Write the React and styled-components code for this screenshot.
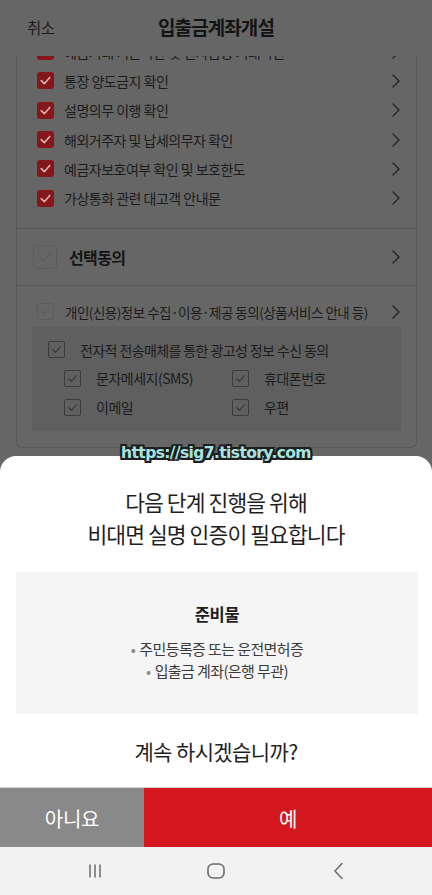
import React from 'react'
import styled, { createGlobalStyle } from 'styled-components'

const GlobalStyle = createGlobalStyle`
  html, body { margin: 0; padding: 0; }
  body {
    font-family: "Noto Sans CJK KR", "Noto Sans", sans-serif;
    background: #666666;
  }
`

const requiredItems = [
    '예금거래 기본약관 및 전자금융 거래약관',
    '통장 양도금지 확인',
    '설명의무 이행 확인',
    '해외거주자 및 납세의무자 확인',
    '예금자보호여부 확인 및 보호한도',
    '가상통화 관련 대고객 안내문',
]

const Check = ({ color = '#dcaeb0', width = 1.6 }) => (
    <svg width="100%" height="100%" viewBox="0 0 16 16">
        <path d="M4 8.2 L6.9 11 L12 5.2" fill="none" stroke={color} strokeWidth={width} strokeLinecap="round" strokeLinejoin="round" />
    </svg>
)

const Chevron = () => (
    <svg width="8" height="14" viewBox="0 0 8 14">
        <path d="M1 1 L7 7 L1 13" fill="none" stroke="#262626" strokeWidth="1.4" strokeLinecap="round" strokeLinejoin="round" />
    </svg>
)

const App = () => {
    return (<>
    <GlobalStyle />
    <Screen>
        <Header>
            <Cancel>취소</Cancel>
            <Title>입출금계좌개설</Title>
            <span />
        </Header>
        <Scroll>
            <Card>
                <Group>
                    {requiredItems.map((t) => (
                        <Row key={t}>
                            <RedBox><Check /></RedBox>
                            <RowText>{t}</RowText>
                            <Chevron />
                        </Row>
                    ))}
                </Group>
                <OptionHead>
                    <BigBox><Check color="#5f5f5f" width={1.2} /></BigBox>
                    <OptionTitle>선택동의</OptionTitle>
                    <Chevron />
                </OptionHead>
                <OptionBody>
                    <Row>
                        <FaintBox><Check color="#5d5d5d" width={1.3} /></FaintBox>
                        <SmallText>개인(신용)정보 수집·이용·제공 동의(상품서비스 안내 등)</SmallText>
                        <Chevron />
                    </Row>
                    <InnerBox>
                        <InnerRow>
                            <LineBox><Check color="#3a3a3a" width={1.3} /></LineBox>
                            <SmallText>전자적 전송매체를 통한 광고성 정보 수신 동의</SmallText>
                        </InnerRow>
                        <ChannelGrid>
                            {['문자메세지(SMS)', '휴대폰번호', '이메일', '우편'].map((c) => (
                                <Channel key={c}>
                                    <LineBox><Check color="#3a3a3a" width={1.3} /></LineBox>
                                    <SmallText>{c}</SmallText>
                                </Channel>
                            ))}
                        </ChannelGrid>
                    </InnerBox>
                </OptionBody>
            </Card>
        </Scroll>

        <Sheet>
            <Watermark>https://sig7.tistory.com</Watermark>
            <SheetTitle>다음 단계 진행을 위해<br />비대면 실명 인증이 필요합니다</SheetTitle>
            <Prepare>
                <PrepareTitle>준비물</PrepareTitle>
                <Bullet>주민등록증 또는 운전면허증</Bullet>
                <Bullet>입출금 계좌(은행 무관)</Bullet>
            </Prepare>
            <Question>계속 하시겠습니까?</Question>
            <Buttons>
                <Button $tone="no">아니요</Button>
                <Button $tone="yes">예</Button>
            </Buttons>
        </Sheet>

        <NavBar>
            <svg width="16" height="16" viewBox="0 0 16 16">
                <path d="M3 1.5 V14.5 M8 1.5 V14.5 M13 1.5 V14.5" stroke="#6c6c6c" strokeWidth="1.5" />
            </svg>
            <svg width="18" height="16" viewBox="0 0 18 16">
                <rect x="1" y="1" width="16" height="14" rx="5" fill="none" stroke="#6c6c6c" strokeWidth="1.6" />
            </svg>
            <svg width="12" height="18" viewBox="0 0 12 18">
                <path d="M10 1.5 L3 9 L10 16.5" fill="none" stroke="#6c6c6c" strokeWidth="1.6" strokeLinecap="round" strokeLinejoin="round" />
            </svg>
        </NavBar>
    </Screen>
    </>)
}
export default App

const Screen = styled.div`
    position: relative;
    width: 432px;
    height: 895px;
    overflow: hidden;
    background: #666666;
    display: flex;
    flex-direction: column;
`
const Header = styled.div`
    position: relative;
    z-index: 1;
    height: 56px;
    flex: none;
    background: #666666;
    display: grid;
    grid-template-columns: 90px 1fr 90px;
    align-items: center;
`
const Cancel = styled.span`
    padding-left: 27px;
    font-size: 15.5px;
    letter-spacing: -0.5px;
    color: #1d1d1d;
    margin-top: -2px;
`
const Title = styled.span`
    text-align: center;
    font-size: 19px;
    font-weight: 700;
    letter-spacing: -0.9px;
    color: #141414;
    margin-top: -4px;
`
const Scroll = styled.div`
    flex: 1;
    overflow: hidden;
`
const Card = styled.div`
    margin: -27px 15px 0 16px;
    border: 1px solid #5a5a5a;
    border-top: none;
    border-radius: 0 0 6px 6px;
`
const Group = styled.div`
    padding: 8px 0 15px;
    border-bottom: 1px solid #575757;
`
const Row = styled.div`
    height: 29.3px;
    display: flex;
    align-items: center;
    padding: 0 16px 0 20px;
`
const RowText = styled.span`
    flex: 1;
    margin-left: 10px;
    font-size: 14px;
    letter-spacing: -0.5px;
    color: #1c1c1c;
    white-space: nowrap;
`
const RedBox = styled.span`
    width: 17px;
    height: 17px;
    border-radius: 3px;
    background: #84161c;
    flex: none;
    display: flex;
`
const OptionHead = styled.div`
    height: 56px;
    display: flex;
    align-items: center;
    padding: 0 16px;
    border-bottom: 1px solid #575757;
`
const BigBox = styled.span`
    width: 22px;
    height: 22px;
    border: 1px solid #5c5c5c;
    border-radius: 4px;
    flex: none;
    display: flex;
`
const OptionTitle = styled.span`
    flex: 1;
    margin-left: 12px;
    font-size: 16px;
    font-weight: 700;
    letter-spacing: -0.6px;
    color: #141414;
`
const OptionBody = styled.div`
    padding: 12px 0 16px;
    & > ${Row} {
        height: 28px;
    }
`
const FaintBox = styled.span`
    width: 15px;
    height: 15px;
    border: 1px solid #5d5d5d;
    border-radius: 2px;
    flex: none;
    display: flex;
`
const SmallText = styled.span`
    flex: 1;
    margin-left: 11px;
    font-size: 13.5px;
    letter-spacing: -0.5px;
    color: #1c1c1c;
    white-space: nowrap;
`
const InnerBox = styled.div`
    margin: 0 15px;
    padding: 10px 0 9px 16px;
    background: #5f5f5f;
`
const InnerRow = styled.div`
    height: 28px;
    display: flex;
    align-items: center;
    & > ${SmallText} {
        margin-left: 15px;
        font-size: 14px;
        letter-spacing: -0.6px;
    }
`
const LineBox = styled.span`
    width: 15px;
    height: 15px;
    border: 1px solid #3c3c3c;
    border-radius: 2px;
    flex: none;
    display: flex;
`
const ChannelGrid = styled.div`
    display: grid;
    grid-template-columns: 168px 1fr;
    padding-left: 16px;
`
const Channel = styled.div`
    height: 29px;
    display: flex;
    align-items: center;
    & > ${SmallText} {
        margin-left: 15px;
        font-size: 14px;
    }
`
const Sheet = styled.div`
    position: absolute;
    left: 0;
    right: 0;
    bottom: 47px;
    z-index: 2;
    background: #ffffff;
    border-radius: 16px 16px 0 0;
    display: flex;
    flex-direction: column;
`
const Watermark = styled.div`
    position: absolute;
    top: -12px;
    left: 0;
    right: 0;
    text-align: center;
    font-family: "DejaVu Sans", sans-serif;
    font-weight: 700;
    font-size: 15.5px;
    letter-spacing: -0.6px;
    color: #a6e3e1;
    text-shadow:
        -2px -2px 0 #1e1e1e, 2px -2px 0 #1e1e1e, -2px 2px 0 #1e1e1e, 2px 2px 0 #1e1e1e,
        0 -2px 0 #1e1e1e, 0 2px 0 #1e1e1e, -2px 0 0 #1e1e1e, 2px 0 0 #1e1e1e;
`
const SheetTitle = styled.div`
    padding-top: 30px;
    text-align: center;
    font-size: 21.5px;
    line-height: 32px;
    letter-spacing: -0.9px;
    color: #1f1f1f;
`
const Prepare = styled.div`
    margin: 22px 14px 0 16px;
    padding: 30px 0 32px;
    background: #f5f5f5;
    display: flex;
    flex-direction: column;
    align-items: center;
`
const PrepareTitle = styled.div`
    font-size: 16.5px;
    font-weight: 700;
    line-height: 24px;
    letter-spacing: -0.4px;
    color: #1f1f1f;
    margin-bottom: 12px;
`
const Bullet = styled.div`
    font-size: 15px;
    line-height: 22px;
    letter-spacing: -0.6px;
    color: #3a3a3a;
    &::before {
        content: "•";
        color: #8a8a8a;
        margin-right: 4px;
    }
`
const Question = styled.div`
    height: 73px;
    display: flex;
    align-items: center;
    justify-content: center;
    font-size: 21px;
    letter-spacing: -0.6px;
    color: #1f1f1f;
`
const Buttons = styled.div`
    display: grid;
    grid-template-columns: 144px 1fr;
    height: 60px;
    border-top: 1px solid #d4d4d4;
`
const Button = styled.button`
    border: none;
    margin: 0;
    padding: 0;
    font-family: inherit;
    font-size: 20px;
    letter-spacing: -0.3px;
    color: #ffffff;
    background: ${(p) => (p.$tone === 'yes' ? '#d5171f' : '#898989')};
`
const NavBar = styled.div`
    position: absolute;
    left: 0;
    right: 0;
    bottom: 0;
    z-index: 2;
    height: 47px;
    background: #f2f2f2;
    display: grid;
    grid-template-columns: 190px 52px 190px;
    justify-items: center;
    align-items: center;
    padding-bottom: 1px;
    & > svg:first-child { justify-self: end; margin-right: 87px; }
    & > svg:last-child { justify-self: start; margin-left: 90px; }
`
